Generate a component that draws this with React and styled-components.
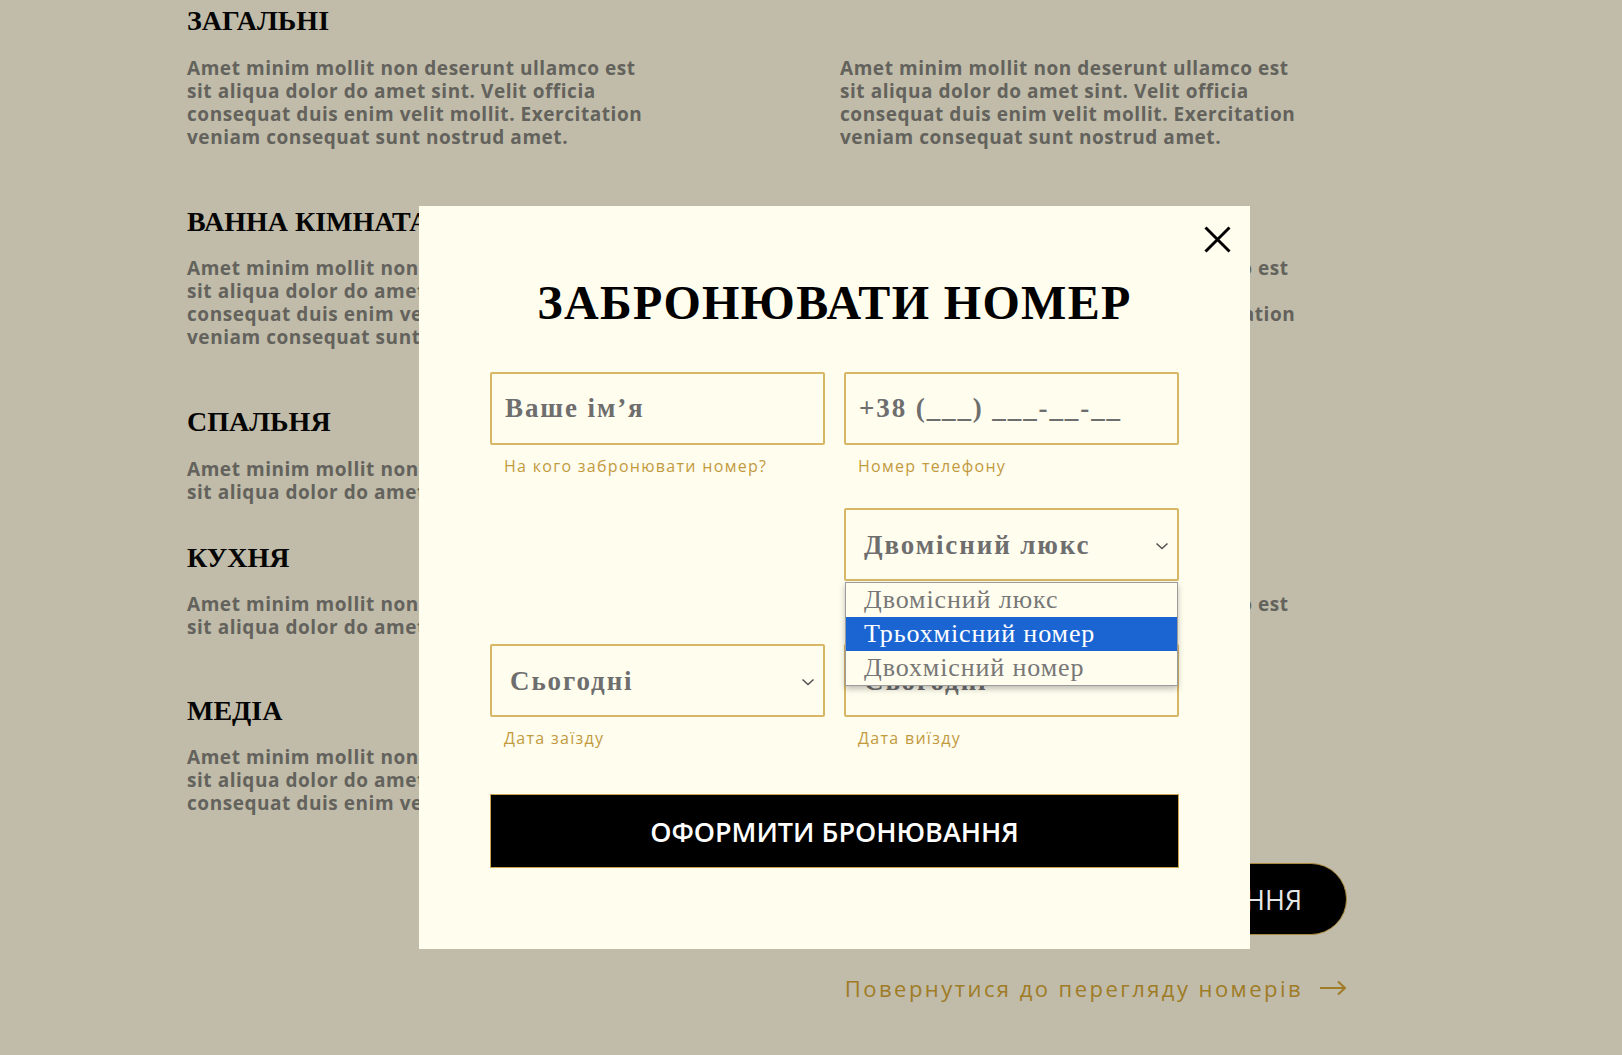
import React from 'react';
import styled, { createGlobalStyle } from 'styled-components';

const GlobalStyle = createGlobalStyle`
  body {
    margin: 0;
    background-color: #c0bca9;
    font-family: 'Open Sans', sans-serif;
  }
`;

const Page = styled.main`
  width: 1160px;
  padding: 7px 0 0 187px;
`;

const Section = styled.section`
  margin-bottom: ${(p) => p.$space}px;
`;

const SectionTitle = styled.h3`
  margin: 0 0 21.5px;
  font: 700 28px/28px 'Liberation Serif', serif;
  color: #050505;
`;

const Columns = styled.div`
  display: grid;
  grid-template-columns: 470px 470px;
  column-gap: 183px;
`;

const Text = styled.p`
  margin: 0;
  font: 700 19px/23px 'Open Sans', sans-serif;
  letter-spacing: 0.55px;
  color: #63625c;
  white-space: nowrap;
`;

const Bottom = styled.div`
  display: flex;
  flex-direction: column;
  align-items: flex-end;
  margin-top: 48px;
`;

const PillButton = styled.button`
  height: 72px;
  padding: 0 44px 0 70px;
  border-radius: 36px;
  border: 1px solid #a98a3c;
  background: #000;
  color: #e6e6e6;
  font: 500 27px 'Open Sans', sans-serif;
`;

const BackLink = styled.a`
  display: flex;
  align-items: center;
  gap: 17px;
  margin-top: 38px;
  font: 500 22px/30px 'Open Sans', sans-serif;
  letter-spacing: 2.45px;
  color: #9f7b25;
  text-decoration: none;
`;

const Modal = styled.div`
  position: fixed;
  top: 206px;
  left: 419px;
  width: 831px;
  box-sizing: border-box;
  padding: 69px 71px 81px;
  background: #fffdee;
`;

const CloseButton = styled.button`
  position: absolute;
  top: 20px;
  right: 19px;
  width: 27px;
  height: 27px;
  padding: 0;
  border: none;
  background: none;
  line-height: 0;
`;

const ModalTitle = styled.h2`
  margin: 0 0 41px;
  text-align: center;
  font: 700 48px/56px 'Liberation Serif', serif;
  letter-spacing: 1.35px;
  color: #000;
`;

const FormGrid = styled.form`
  display: grid;
  grid-template-columns: repeat(2, minmax(0, 1fr));
  column-gap: 19px;
  row-gap: 32px;
`;

const Field = styled.div`
  position: relative;
  display: flex;
  flex-direction: column;
  min-width: 0;
`;

const boxStyles = `
  width: 100%;
  height: 73px;
  box-sizing: border-box;
  border: 2px solid #d7b666;
  border-radius: 2px;
  background: transparent;
  font: 700 27px 'Liberation Serif', serif;
  letter-spacing: 1.9px;
  color: #6e6e6e;
`;

const Input = styled.input`
  ${boxStyles}
  padding: 0 13px;
  outline: none;
  &::placeholder {
    color: #6e6e6e;
    opacity: 1;
  }
`;

const SelectBox = styled.div`
  ${boxStyles}
  display: flex;
  align-items: center;
  justify-content: space-between;
  padding: 2px 8px 0 18px;
`;

const Helper = styled.span`
  margin-top: 11px;
  min-height: 20px;
  padding-left: 14px;
  font: 400 16px/20px 'Open Sans', sans-serif;
  letter-spacing: 1.3px;
  color: #c29a3e;
`;

const OptionList = styled.ul`
  position: absolute;
  top: 74px;
  left: 1px;
  right: 1px;
  z-index: 2;
  margin: 0;
  padding: 0;
  list-style: none;
  background: #fffdee;
  border: 1px solid #9c9c9c;
  box-shadow: 0 3px 6px rgba(0, 0, 0, 0.25);
`;

const Option = styled.li`
  height: 34px;
  padding-left: 18px;
  font: 400 26px/34px 'Liberation Serif', serif;
  letter-spacing: 0.9px;
  color: ${(p) => (p.$active ? '#fff' : '#777')};
  background: ${(p) => (p.$active ? '#1b65d3' : 'transparent')};
`;

const Submit = styled.button`
  grid-column: 1 / -1;
  height: 74px;
  margin-top: 14px;
  border: 1px solid #c9a54f;
  background: #000;
  color: #fff;
  font: 600 27px 'Open Sans', sans-serif;
`;

const lorem = [
  'Amet minim mollit non deserunt ullamco est',
  'sit aliqua dolor do amet sint. Velit officia',
  'consequat duis enim velit mollit. Exercitation',
  'veniam consequat sunt nostrud amet.',
];

const sections = [
  { title: 'ЗАГАЛЬНІ', left: 4, right: 4, space: 59 },
  { title: 'ВАННА КІМНАТА', left: 4, right: 4, space: 59 },
  { title: 'СПАЛЬНЯ', left: 2, right: 0, space: 40 },
  { title: 'КУХНЯ', left: 2, right: 2, space: 57.5 },
  { title: 'МЕДІА', left: 3, right: 0, space: 0 },
];

const Lines = ({ count }) => (
  <Text>
    {lorem.slice(0, count).map((line, i) => (
      <React.Fragment key={i}>
        {i > 0 && <br />}
        {line}
      </React.Fragment>
    ))}
  </Text>
);

const Chevron = () => (
  <svg width="14" height="8" viewBox="0 0 14 8">
    <polyline points="1.5,1.5 7,6.5 12.5,1.5" fill="none" stroke="#555" strokeWidth="1.6" />
  </svg>
);

const rooms = ['Двомісний люкс', 'Трьохмісний номер', 'Двохмісний номер'];

const BookingModal = () => (
  <Modal>
    <CloseButton aria-label="close">
      <svg width="27" height="27" viewBox="0 0 27 27">
        <path d="M1.5 1.5 L25.5 25.5 M25.5 1.5 L1.5 25.5" stroke="#000" strokeWidth="3" />
      </svg>
    </CloseButton>
    <ModalTitle>ЗАБРОНЮВАТИ НОМЕР</ModalTitle>
    <FormGrid onSubmit={(e) => e.preventDefault()}>
      <Field>
        <Input placeholder="Ваше ім’я" />
        <Helper>На кого забронювати номер?</Helper>
      </Field>
      <Field>
        <Input placeholder="+38 (___) ___-__-__" />
        <Helper>Номер телефону</Helper>
      </Field>
      <Field />
      <Field>
        <SelectBox>
          Двомісний люкс
          <Chevron />
        </SelectBox>
        <Helper />
        <OptionList>
          {rooms.map((room, i) => (
            <Option key={room} $active={i === 1}>
              {room}
            </Option>
          ))}
        </OptionList>
      </Field>
      <Field>
        <SelectBox>
          Сьогодні
          <Chevron />
        </SelectBox>
        <Helper>Дата заїзду</Helper>
      </Field>
      <Field style={{ zIndex: 0 }}>
        <SelectBox>
          Сьогодні
          <Chevron />
        </SelectBox>
        <Helper>Дата виїзду</Helper>
      </Field>
      <Submit type="submit">ОФОРМИТИ БРОНЮВАННЯ</Submit>
    </FormGrid>
  </Modal>
);

export default function App() {
  return (
    <>
      <GlobalStyle />
      <Page>
        {sections.map((s) => (
          <Section key={s.title} $space={s.space}>
            <SectionTitle>{s.title}</SectionTitle>
            <Columns>
              <Lines count={s.left} />
              {s.right > 0 && <Lines count={s.right} />}
            </Columns>
          </Section>
        ))}
        <Bottom>
          <PillButton>БРОНЮВАННЯ</PillButton>
          <BackLink href="#">
            Повернутися до перегляду номерів
            <svg width="27" height="16" viewBox="0 0 27 16">
              <path d="M0 8 H25 M18 1.5 L25 8 L18 14.5" fill="none" stroke="#9f7b25" strokeWidth="2" />
            </svg>
          </BackLink>
        </Bottom>
      </Page>
      <BookingModal />
    </>
  );
}
